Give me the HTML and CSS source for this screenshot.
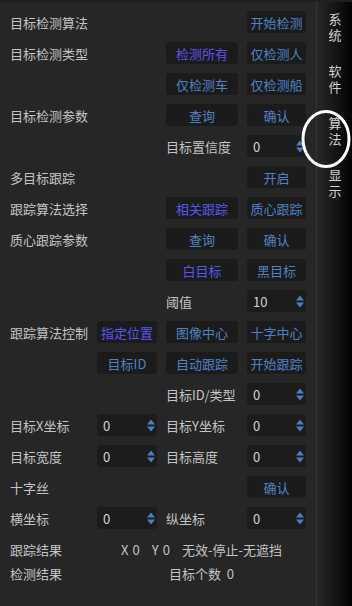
FILE: index.html
```html
<!DOCTYPE html>
<html lang="zh">
<head>
<meta charset="utf-8">
<link rel="stylesheet" href="styles.css">
</head>
<body>
<div class="app">
  <main class="panel">
    <div class="grid">
      <div class="lbl c1">目标检测算法</div>
      <div class="btn c4">开始检测</div>

      <div class="lbl c1">目标检测类型</div>
      <div class="btn active c3">检测所有</div>
      <div class="btn c4">仅检测人</div>

      <div class="btn c3">仅检测车</div>
      <div class="btn c4">仅检测船</div>

      <div class="lbl c1">目标检测参数</div>
      <div class="btn c3">查询</div>
      <div class="btn c4">确认</div>

      <div class="lbl c3">目标置信度</div>
      <div class="spin c4"><span>0</span><svg viewBox="0 0 8 13" width="8" height="13"><path d="M0 5.5 L4 0.5 L8 5.5 Z M0 7.5 L8 7.5 L4 12.5 Z"/></svg></div>

      <div class="lbl c1">多目标跟踪</div>
      <div class="btn c4">开启</div>

      <div class="lbl c1">跟踪算法选择</div>
      <div class="btn active c3">相关跟踪</div>
      <div class="btn c4">质心跟踪</div>

      <div class="lbl c1">质心跟踪参数</div>
      <div class="btn c3">查询</div>
      <div class="btn c4">确认</div>

      <div class="btn active c3">白目标</div>
      <div class="btn c4">黑目标</div>

      <div class="lbl c3">阈值</div>
      <div class="spin c4"><span>10</span><svg viewBox="0 0 8 13" width="8" height="13"><path d="M0 5.5 L4 0.5 L8 5.5 Z M0 7.5 L8 7.5 L4 12.5 Z"/></svg></div>

      <div class="lbl c1">跟踪算法控制</div>
      <div class="btn active c2">指定位置</div>
      <div class="btn c3">图像中心</div>
      <div class="btn c4">十字中心</div>

      <div class="btn c2">目标ID</div>
      <div class="btn c3">自动跟踪</div>
      <div class="btn c4">开始跟踪</div>

      <div class="lbl c3">目标ID/类型</div>
      <div class="spin c4"><span>0</span><svg viewBox="0 0 8 13" width="8" height="13"><path d="M0 5.5 L4 0.5 L8 5.5 Z M0 7.5 L8 7.5 L4 12.5 Z"/></svg></div>

      <div class="lbl c1">目标X坐标</div>
      <div class="spin c2"><span>0</span><svg viewBox="0 0 8 13" width="8" height="13"><path d="M0 5.5 L4 0.5 L8 5.5 Z M0 7.5 L8 7.5 L4 12.5 Z"/></svg></div>
      <div class="lbl c3">目标Y坐标</div>
      <div class="spin c4"><span>0</span><svg viewBox="0 0 8 13" width="8" height="13"><path d="M0 5.5 L4 0.5 L8 5.5 Z M0 7.5 L8 7.5 L4 12.5 Z"/></svg></div>

      <div class="lbl c1">目标宽度</div>
      <div class="spin c2"><span>0</span><svg viewBox="0 0 8 13" width="8" height="13"><path d="M0 5.5 L4 0.5 L8 5.5 Z M0 7.5 L8 7.5 L4 12.5 Z"/></svg></div>
      <div class="lbl c3">目标高度</div>
      <div class="spin c4"><span>0</span><svg viewBox="0 0 8 13" width="8" height="13"><path d="M0 5.5 L4 0.5 L8 5.5 Z M0 7.5 L8 7.5 L4 12.5 Z"/></svg></div>

      <div class="lbl c1">十字丝</div>
      <div class="btn c4">确认</div>

      <div class="lbl c1">横坐标</div>
      <div class="spin c2"><span>0</span><svg viewBox="0 0 8 13" width="8" height="13"><path d="M0 5.5 L4 0.5 L8 5.5 Z M0 7.5 L8 7.5 L4 12.5 Z"/></svg></div>
      <div class="lbl c3">纵坐标</div>
      <div class="spin c4"><span>0</span><svg viewBox="0 0 8 13" width="8" height="13"><path d="M0 5.5 L4 0.5 L8 5.5 Z M0 7.5 L8 7.5 L4 12.5 Z"/></svg></div>
    </div>

    <div class="results">
      <div class="lbl c1">跟踪结果</div>
      <div class="res"><span class="k">X</span><span class="v">0</span><span class="k">Y</span><span class="v">0</span><span class="s">无效-停止-无遮挡</span></div>
      <div class="lbl c1">检测结果</div>
      <div class="res">目标个数&nbsp;&nbsp;0</div>
    </div>
  </main>

  <nav class="side">
    <div class="tab"><span class="vt">系统</span></div>
    <div class="tab"><span class="vt">软件</span></div>
    <div class="tab"><span class="vt">算法</span></div>
    <div class="tab"><span class="vt">显示</span></div>
  </nav>

  <svg class="mark" width="60" height="70" viewBox="0 0 60 70"><ellipse cx="30" cy="35" rx="23" ry="27.5" fill="none" stroke="#ffffff" stroke-width="3"/></svg>
</div>
</body>
</html>
```

FILE: styles.css
```css
* { box-sizing: border-box; }
html, body {
  margin: 0;
  padding: 0;
  background: #262626;
}
body {
  font-family: "Noto Sans CJK SC", "Noto Sans", sans-serif;
  font-size: 13px;
  color: #c4c4c4;
}
.app {
  position: relative;
  width: 352px;
  height: 606px;
  display: flex;
  overflow: hidden;
  border-top: 2px solid #1f1f1f;
}
.panel {
  width: 316px;
  padding: 9px 0 0 10px;
}
.grid, .results {
  display: grid;
  grid-template-columns: 78px 60px 72px 59px;
  column-gap: 9px;
}
.grid {
  grid-auto-rows: 22px;
  row-gap: 9px;
}
.results {
  margin-top: 9px;
  grid-auto-rows: 22px;
  row-gap: 2px;
}
.c1 { grid-column: 1; }
.c2 { grid-column: 2; }
.c3 { grid-column: 3; }
.c4 { grid-column: 4; }
.lbl {
  display: flex;
  align-items: center;
  white-space: nowrap;
  color: #c4c4c4;
}
.btn {
  display: flex;
  align-items: center;
  justify-content: center;
  background: #1b1b1b;
  border-radius: 3px;
  color: #4f82c4;
  white-space: nowrap;
}
.btn.active {
  color: #5b56ea;
}
.spin {
  display: flex;
  align-items: center;
  justify-content: space-between;
  background: #1c1c1c;
  border-radius: 3px;
  padding: 0 2px 0 6px;
  color: #d4d4d4;
}
.spin svg { fill: #4a7fc2; display: block; }
.res {
  grid-column: 2 / 5;
  display: flex;
  align-items: center;
  justify-content: center;
  white-space: nowrap;
  color: #c4c4c4;
}
.res .k { margin-right: 4px; }
.res .v { margin-right: 12px; }
.side {
  width: 36px;
  border-left: 1px solid #333333;
  background: linear-gradient(to right, #262626, #121212 60%, #020202);
  padding-top: 1px;
}
.tab {
  height: 52px;
  display: flex;
  align-items: center;
  justify-content: center;
  color: #d2d2d2;
}
.vt {
  writing-mode: vertical-rl;
  text-orientation: upright;
  letter-spacing: 3px;
  line-height: 16px;
}
.mark {
  position: absolute;
  left: 296px;
  top: 102px;
}
```
